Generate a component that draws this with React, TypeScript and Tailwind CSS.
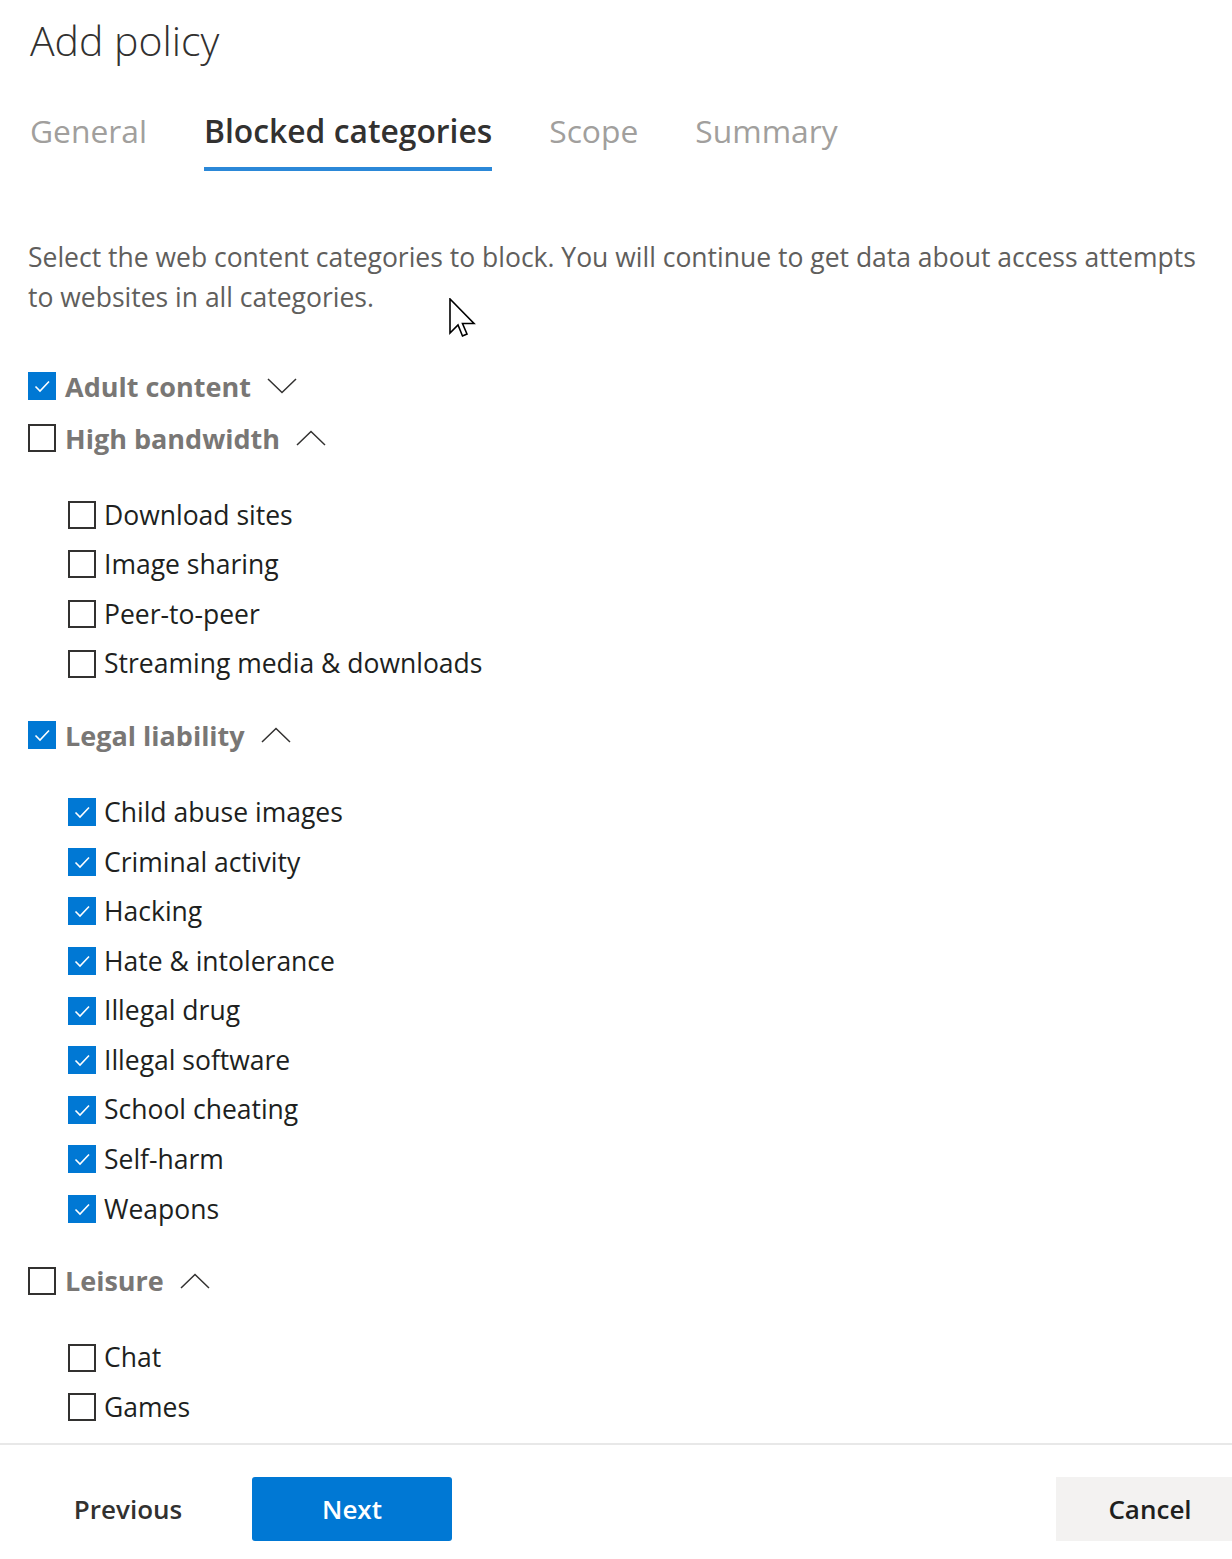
import React from "react";

type Item = { label: string; checked: boolean };
type Group = { title: string; checked: boolean; open: boolean; items: Item[] };

const groups: Group[] = [
  { title: "Adult content", checked: true, open: false, items: [] },
  {
    title: "High bandwidth",
    checked: false,
    open: true,
    items: [
      { label: "Download sites", checked: false },
      { label: "Image sharing", checked: false },
      { label: "Peer-to-peer", checked: false },
      { label: "Streaming media & downloads", checked: false },
    ],
  },
  {
    title: "Legal liability",
    checked: true,
    open: true,
    items: [
      { label: "Child abuse images", checked: true },
      { label: "Criminal activity", checked: true },
      { label: "Hacking", checked: true },
      { label: "Hate & intolerance", checked: true },
      { label: "Illegal drug", checked: true },
      { label: "Illegal software", checked: true },
      { label: "School cheating", checked: true },
      { label: "Self-harm", checked: true },
      { label: "Weapons", checked: true },
    ],
  },
  {
    title: "Leisure",
    checked: false,
    open: true,
    items: [
      { label: "Chat", checked: false },
      { label: "Games", checked: false },
    ],
  },
];

const tabs = ["General", "Blocked categories", "Scope", "Summary"];

const CheckBox = ({ checked }: { checked: boolean }) =>
  checked ? (
    <span className="flex h-[28px] w-[28px] shrink-0 items-center justify-center bg-[#0078d4]">
      <svg width="20" height="20" viewBox="0 0 20 20" fill="none">
        <path d="M3.5 10.5 L8 15 L17 5.5" stroke="#fff" strokeWidth="1.6" />
      </svg>
    </span>
  ) : (
    <span className="block h-[28px] w-[28px] shrink-0 border-2 border-[#323130] bg-white" />
  );

const Chevron = ({ up }: { up: boolean }) => (
  <svg width="30" height="16" viewBox="0 0 30 16" fill="none" className="ml-[16px]">
    {up ? (
      <path d="M1 15 L15 1.5 L29 15" stroke="#323130" strokeWidth="1.5" />
    ) : (
      <path d="M1 1 L15 14.5 L29 1" stroke="#323130" strokeWidth="1.5" />
    )}
  </svg>
);

const Cursor = () => (
  <svg
    width="28"
    height="42"
    viewBox="0 0 28 42"
    className="pointer-events-none absolute left-[449px] top-[298px]"
  >
    <path
      d="M1 1 L1 35 L9 27 L13.5 38 L18 36 L13.5 25.5 L25 25.5 Z"
      fill="#fff"
      stroke="#000"
      strokeWidth="1.6"
      strokeLinejoin="miter"
    />
  </svg>
);

export default function App() {
  return (
    <div
      className="relative flex h-[1559px] w-[1232px] flex-col overflow-hidden bg-white"
      style={{ fontFamily: '"Open Sans", "Noto Sans", sans-serif' }}
    >
      <div className="h-[1443px] overflow-hidden pl-[28px]">
        <h1 className="mt-[10px] h-[60px] pl-[2px] text-[41px] font-light leading-[60px] text-[#323130]">
          Add policy
        </h1>

        {/* wizard steps */}
        <nav className="mt-[32px] flex h-[75px] items-start gap-[57px] pl-[2px]">
          {tabs.map((t, i) => {
            const active = i === 1;
            return (
              <div key={t} className="flex flex-col">
                <span
                  className={
                    active
                      ? "h-[65px] pt-[4px] text-[31.8px] font-semibold leading-[50px] text-[#323130]"
                      : "h-[65px] pt-[4px] text-[31.8px] font-normal leading-[50px] text-[#a19f9d]"
                  }
                >
                  {t}
                </span>
                <span className={active ? "h-[4px] bg-[#2b88d8]" : "h-[4px]"} />
              </div>
            );
          })}
        </nav>

        <p className="mt-[60px] w-[1182px] text-[26.5px] leading-[40px] text-[#605e5c]">
          Select the web content categories to block. You will continue to get data about access attempts to websites
          in all categories.
        </p>

        <div className="mt-[43px]">
          {groups.map((g) => (
            <div key={g.title}>
              <div className="flex h-[52px] items-center">
                <CheckBox checked={g.checked} />
                <span className="ml-[9px] text-[27px] font-bold leading-none text-[#797775]">{g.title}</span>
                <Chevron up={g.open} />
              </div>
              {g.open && (
                <ul className="mb-[21px] mt-[26px] pl-[40px]">
                  {g.items.map((it) => (
                    <li key={it.label} className="flex h-[49.6px] items-center">
                      <CheckBox checked={it.checked} />
                      <span className="ml-[8px] text-[26.5px] leading-none text-[#201f1e]">{it.label}</span>
                    </li>
                  ))}
                </ul>
              )}
            </div>
          ))}
        </div>
      </div>

      <footer className="flex flex-1 items-start border-t-2 border-[#e8e8e8] pt-[32px]">
        <div className="ml-[28px] flex gap-[24px]">
          <button className="flex h-[64px] w-[200px] items-center justify-center text-[26px] font-semibold text-[#323130]">
            Previous
          </button>
          <button className="flex h-[64px] w-[200px] items-center justify-center rounded-[3px] bg-[#0078d4] text-[26px] font-semibold text-white">
            Next
          </button>
        </div>
        <button className="ml-auto flex h-[64px] w-[176px] items-center justify-center bg-[#f3f2f1] pl-[12px] text-[26px] font-semibold text-[#201f1e]">
          Cancel
        </button>
      </footer>

      <Cursor />
    </div>
  );
}
